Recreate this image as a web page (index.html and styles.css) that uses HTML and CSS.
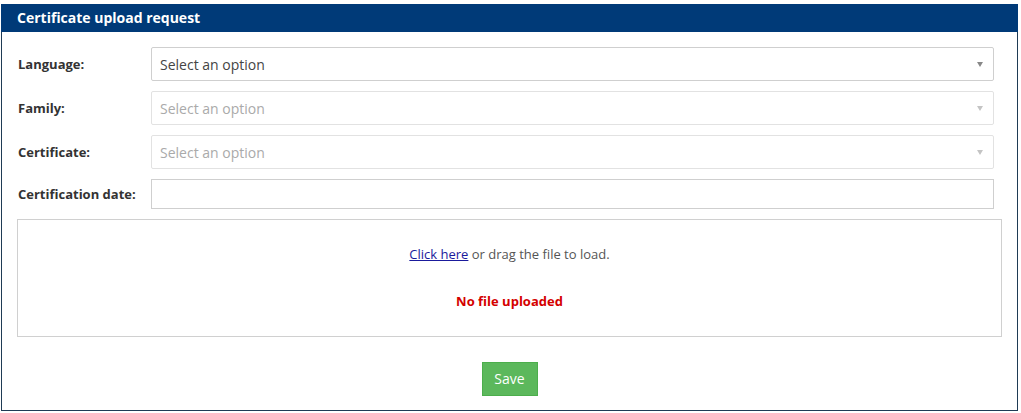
FILE: index.html
```html
<!DOCTYPE html>
<html>
<head>
<meta charset="utf-8">
<link rel="stylesheet" href="styles.css">
</head>
<body>
<div class="panel">
  <div class="panel-head">Certificate upload request</div>
  <div class="panel-body">
    <div class="form">
      <div class="row">
        <label class="lbl">Language:</label>
        <div class="select"><span>Select an option</span><i class="arrow"></i></div>
      </div>
      <div class="row">
        <label class="lbl">Family:</label>
        <div class="select disabled"><span>Select an option</span><i class="arrow"></i></div>
      </div>
      <div class="row">
        <label class="lbl">Certificate:</label>
        <div class="select disabled"><span>Select an option</span><i class="arrow"></i></div>
      </div>
      <div class="row">
        <label class="lbl">Certification date:</label>
        <div class="input"></div>
      </div>
    </div>
    <div class="dropzone">
      <p class="dz-text"><a href="#" class="link">Click here</a> or drag the file to load.</p>
      <p class="dz-status">No file uploaded</p>
    </div>
    <div class="actions">
      <button class="btn">Save</button>
    </div>
  </div>
</div>
</body>
</html>
```
FILE: styles.css
```css
html, body {
  margin: 0;
  padding: 0;
  background: #fff;
}
body {
  padding: 4px 0 0 1px;
  font-family: "Open Sans", "Noto Sans", sans-serif;
}
.panel {
  width: 1017px;
  height: 407px;
  box-sizing: border-box;
  border: 1px solid #1f3b55;
  border-top: none;
}
.panel-head {
  height: 28px;
  background: #003a78;
  color: #fff;
  font-weight: 700;
  font-size: 14px;
  line-height: 28px;
  padding-left: 16px;
  margin: 0 -1px;
}
.panel-body {
  padding: 15px 15px 0 15px;
}
.form {
  display: flex;
  flex-direction: column;
  gap: 10px;
  padding: 0 8px 0 1px;
}
.row {
  display: grid;
  grid-template-columns: 133px 1fr;
  align-items: center;
}
.lbl {
  font-size: 13px;
  font-weight: 700;
  color: #333;
}
.select {
  height: 34px;
  box-sizing: border-box;
  border: 1px solid #cfcfcf;
  border-radius: 2px;
  display: flex;
  align-items: center;
  justify-content: space-between;
  padding: 0 10px 0 8px;
  font-size: 14px;
  color: #444;
}
.select.disabled {
  color: #aaa;
  border-color: #e2e2e2;
}
.arrow {
  width: 0;
  height: 0;
  border-left: 3.5px solid transparent;
  border-right: 3.5px solid transparent;
  border-top: 5px solid #888;
  margin-top: 1px;
}
.select.disabled .arrow {
  border-top-color: #c4c4c4;
}
.input {
  height: 30px;
  box-sizing: border-box;
  border: 1px solid #cfcfcf;
}
.dropzone {
  margin-top: 10px;
  height: 118px;
  box-sizing: border-box;
  border: 1px solid #d0d0d0;
  text-align: center;
  font-size: 13px;
}
.dz-text {
  margin: 25px 0 0;
  color: #555;
  line-height: 18px;
}
.link {
  color: #1a1a9c;
  text-decoration: underline;
}
.dz-status {
  margin: 29px 0 0;
  color: #d40000;
  font-weight: 700;
  line-height: 18px;
}
.actions {
  display: flex;
  justify-content: center;
  padding-top: 25px;
}
.btn {
  width: 56px;
  height: 34px;
  background: #5cb85c;
  border: 1px solid #4cae4c;
  color: #fff;
  font-family: "Open Sans", "Noto Sans", sans-serif;
  font-size: 14px;
  border-radius: 0;
  padding: 0 0 1px;
}
```
